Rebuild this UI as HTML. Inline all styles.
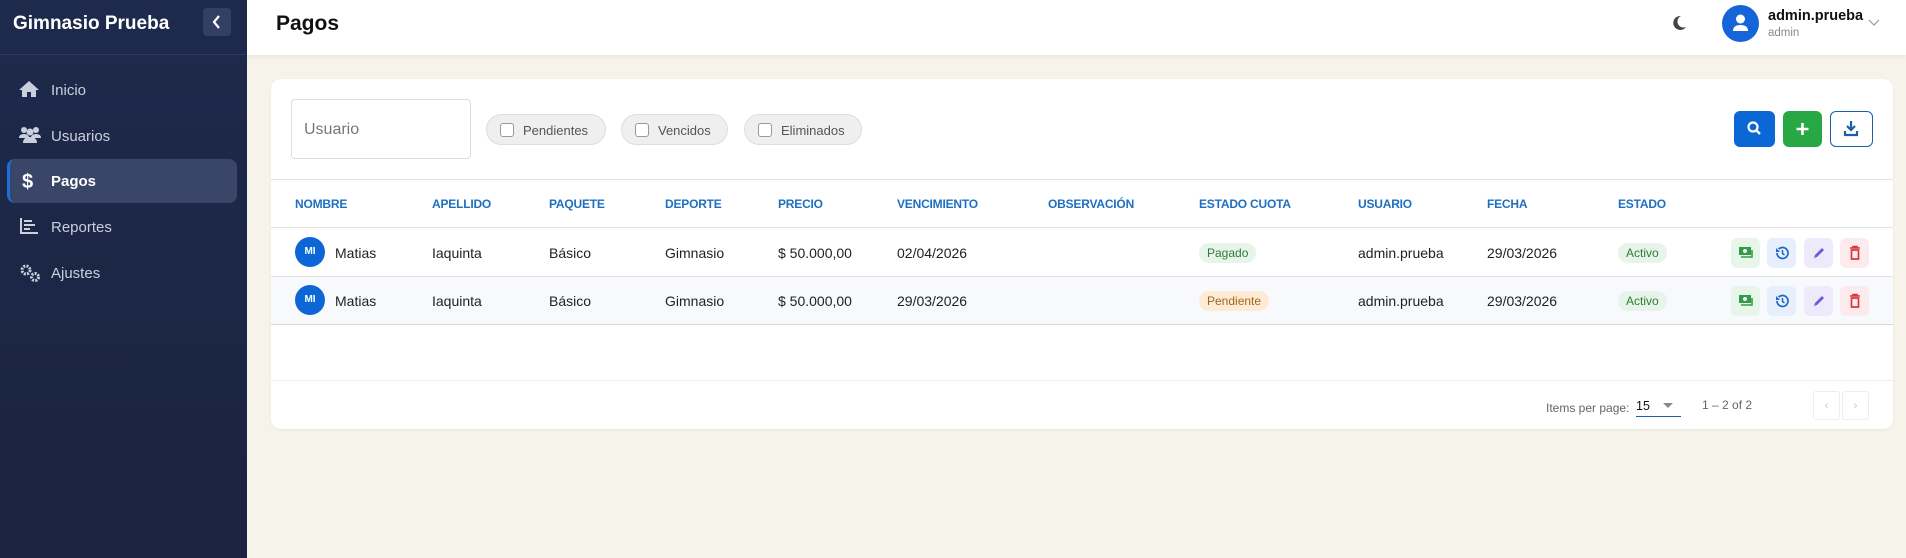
<!DOCTYPE html>
<html><head><meta charset="utf-8"><style>
*{box-sizing:border-box;margin:0;padding:0}
body{width:1906px;height:558px;overflow:hidden;background:#f6f4ea;font-family:"Liberation Sans",sans-serif;position:relative;color:#222}
.a{position:absolute;white-space:nowrap}
#side{left:0;top:0;width:247px;height:558px;background:linear-gradient(#1e2a4c,#1a2340);color:#c9cfdc}
#side .t{left:13px;top:13px;font-size:19px;font-weight:bold;color:#fff}
#side .tog{left:203px;top:8px;width:28px;height:28px;background:#334063;border-radius:4px}
#side .ln{left:0;top:54px;width:247px;height:1px;background:#2d3a5c}
.mi{left:7px;width:230px;height:44px;font-size:15px;color:#c9cfdc}
.mi span{position:absolute;left:44px;top:14px}
.mi svg{position:absolute;left:12px;top:12px}
.act{background:#3a4668;border-radius:8px;border-left:3px solid #1e6fd9;color:#fff;font-weight:bold}
#hdr{left:247px;top:0;width:1659px;height:55px;background:#fff;box-shadow:0 2px 5px rgba(0,0,0,.06)}
#card{left:271px;top:79px;width:1622px;height:350px;background:#fff;border-radius:10px;box-shadow:0 1px 3px rgba(0,0,0,.05)}
.chip{top:114px;height:31px;border:1px solid #ddd;background:#efefef;border-radius:16px;font-size:13px;color:#555}
.chip i{position:absolute;left:13px;top:8px;width:14px;height:14px;border:1px solid #999;border-radius:3px;background:#fff}
.chip span{position:absolute;left:36px;top:8px}
.hd{top:197px;font-size:12px;color:#1f6fc1;font-weight:bold;letter-spacing:-.2px}
.c{font-size:14px;color:#222}
.hl{left:271px;width:1622px;height:1px;background:#e2e2e2}
.badge{height:20px;border-radius:10px;font-size:12px;padding:3px 8px}
.ab{width:29px;height:30px;border-radius:6px}
.ab svg{position:absolute;left:7px;top:7px}
</style></head><body>
<div id="side" class="a">
<div class="a t">Gimnasio Prueba</div>
<div class="a tog"><svg width="28" height="28" viewBox="0 0 28 28"><path d="M16 8l-5 6 5 6" fill="none" stroke="#fff" stroke-width="2.2"/></svg></div>
<div class="a ln"></div>
<div class="a mi" style="top:68px"><svg width="20" height="18" viewBox="0 0 20 18"><path d="M10 1L0 10h3v7h5v-5h4v5h5v-7h3z" fill="#c9cfdc"/></svg><span>Inicio</span></div>
<div class="a mi" style="top:114px"><svg width="22" height="18" viewBox="0 0 22 18"><circle cx="5" cy="4" r="3" fill="#c9cfdc"/><circle cx="17" cy="4" r="3" fill="#c9cfdc"/><circle cx="11" cy="6" r="3.5" fill="#c9cfdc"/><path d="M0 12q0-4 5-4t5 4zM12 12q0-4 5-4t5 4zM4 17q0-6 7-6t7 6z" fill="#c9cfdc"/></svg><span>Usuarios</span></div>
<div class="a mi act" style="top:159px"><svg width="18" height="20" viewBox="0 0 18 20" style="left:9px"><text x="3" y="17" font-size="20" font-weight="bold" fill="#fff" font-family="Liberation Sans">$</text></svg><span style="left:41px">Pagos</span></div>
<div class="a mi" style="top:205px"><svg width="20" height="18" viewBox="0 0 20 18"><path d="M2 1v15h17" fill="none" stroke="#c9cfdc" stroke-width="2"/><path d="M5 4h8M5 8h11M5 12h6" stroke="#c9cfdc" stroke-width="2"/></svg><span>Reportes</span></div>
<div class="a mi" style="top:251px"><svg width="22" height="20" viewBox="0 0 22 20"><circle cx="7" cy="7" r="4" fill="none" stroke="#c9cfdc" stroke-width="3" stroke-dasharray="2 1.2"/><circle cx="16" cy="14" r="3.5" fill="none" stroke="#c9cfdc" stroke-width="3" stroke-dasharray="2 1.2"/></svg><span>Ajustes</span></div>
</div>
<div id="hdr" class="a">
<div class="a" style="left:29px;top:12px;font-size:21px;font-weight:bold;color:#111">Pagos</div>
<svg class="a" style="left:1424px;top:15px" width="16" height="16" viewBox="0 0 16 16"><path d="M10 1a7 7 0 1 0 5 11a6 6 0 0 1-5-11z" fill="#444"/></svg>
<div class="a" style="left:1475px;top:5px;width:37px;height:37px;border-radius:50%;background:#1565d8"><svg width="37" height="37" viewBox="0 0 37 37"><circle cx="18.5" cy="14" r="4.5" fill="#fff"/><path d="M11 26q0-6 7.5-6t7.5 6z" fill="#fff"/></svg></div>
<div class="a" style="left:1521px;top:8px;font-size:14.5px;font-weight:bold;color:#111">admin.prueba</div>
<div class="a" style="left:1521px;top:27px;font-size:11.5px;color:#888">admin</div>
<svg class="a" style="left:1621px;top:19px" width="12" height="8" viewBox="0 0 12 8"><path d="M1 1l5 5 5-5" fill="none" stroke="#999" stroke-width="1.2"/></svg>
</div>
<div id="card" class="a"></div>
<div class="a" style="left:291px;top:99px;width:180px;height:60px;border:1px solid #ddd;border-radius:4px"><span class="a" style="left:12px;top:21px;font-size:16px;color:#777">Usuario</span></div>
<div class="a chip" style="left:486px;width:120px"><i></i><span>Pendientes</span></div>
<div class="a chip" style="left:621px;width:107px"><i></i><span>Vencidos</span></div>
<div class="a chip" style="left:744px;width:118px"><i></i><span>Eliminados</span></div>
<div class="a" style="left:1734px;top:111px;width:41px;height:36px;background:#0b66d6;border-radius:6px"><svg width="41" height="36" viewBox="0 0 41 36"><circle cx="19" cy="16" r="4.5" fill="none" stroke="#fff" stroke-width="2.2"/><path d="M22 19l4 4" stroke="#fff" stroke-width="2.4"/></svg></div>
<div class="a" style="left:1783px;top:111px;width:39px;height:36px;background:#28a745;border-radius:6px"><svg width="39" height="36" viewBox="0 0 39 36"><path d="M19.5 12v12M13.5 18h12" stroke="#fff" stroke-width="2.6"/></svg></div>
<div class="a" style="left:1830px;top:111px;width:43px;height:36px;border:1.5px solid #1a5fa8;border-radius:6px"><svg width="40" height="33" viewBox="0 0 40 33"><path d="M20 9v9M16 14l4 4 4-4" fill="none" stroke="#1a5fa8" stroke-width="2.2"/><path d="M14 19v4h12v-4" fill="none" stroke="#1a5fa8" stroke-width="2.2"/></svg></div>
<div class="a hl" style="top:179px"></div>
<div class="a hd" style="left:295px">NOMBRE</div>
<div class="a hd" style="left:432px">APELLIDO</div>
<div class="a hd" style="left:549px">PAQUETE</div>
<div class="a hd" style="left:665px">DEPORTE</div>
<div class="a hd" style="left:778px">PRECIO</div>
<div class="a hd" style="left:897px">VENCIMIENTO</div>
<div class="a hd" style="left:1048px">OBSERVACIÓN</div>
<div class="a hd" style="left:1199px">ESTADO CUOTA</div>
<div class="a hd" style="left:1358px">USUARIO</div>
<div class="a hd" style="left:1487px">FECHA</div>
<div class="a hd" style="left:1618px">ESTADO</div>
<div class="a hl" style="top:227px"></div>
<div class="a" style="left:271px;top:277px;width:1622px;height:48px;background:#f7f9fc"></div>
<div class="a hl" style="top:276px"></div>
<div class="a hl" style="top:324px;background:#d6d6d6"></div>
<div class="a hl" style="top:380px;background:#ececec"></div>

<div class="a" style="left:0;top:229px">
<div class="a" style="left:295px;top:8px;width:30px;height:30px;border-radius:50%;background:#0d66d6;color:#fff;font-size:10px;font-weight:bold;text-align:center;line-height:30px">MI</div>
<div class="a c" style="left:335px;top:16px">Matias</div>
<div class="a c" style="left:432px;top:16px">Iaquinta</div>
<div class="a c" style="left:549px;top:16px">Básico</div>
<div class="a c" style="left:665px;top:16px">Gimnasio</div>
<div class="a c" style="left:778px;top:16px">$ 50.000,00</div>
<div class="a c" style="left:897px;top:16px">02/04/2026</div>
<div class="a badge" style="left:1199px;top:14px;background:#e6f4ea;color:#2e7d32">Pagado</div>
<div class="a c" style="left:1358px;top:16px">admin.prueba</div>
<div class="a c" style="left:1487px;top:16px">29/03/2026</div>
<div class="a badge" style="left:1618px;top:14px;background:#e6f4ea;color:#2e7d32">Activo</div>
</div>
<div class="a" style="left:0;top:277px">
<div class="a" style="left:295px;top:8px;width:30px;height:30px;border-radius:50%;background:#0d66d6;color:#fff;font-size:10px;font-weight:bold;text-align:center;line-height:30px">MI</div>
<div class="a c" style="left:335px;top:16px">Matias</div>
<div class="a c" style="left:432px;top:16px">Iaquinta</div>
<div class="a c" style="left:549px;top:16px">Básico</div>
<div class="a c" style="left:665px;top:16px">Gimnasio</div>
<div class="a c" style="left:778px;top:16px">$ 50.000,00</div>
<div class="a c" style="left:897px;top:16px">29/03/2026</div>
<div class="a badge" style="left:1199px;top:14px;background:#fdebd6;color:#a0661a">Pendiente</div>
<div class="a c" style="left:1358px;top:16px">admin.prueba</div>
<div class="a c" style="left:1487px;top:16px">29/03/2026</div>
<div class="a badge" style="left:1618px;top:14px;background:#e6f4ea;color:#2e7d32">Activo</div>
</div>

<div class="a" style="left:0;top:238px">
<div class="a ab" style="left:1731px;top:0;background:#e8f5ea"><svg width="16" height="16" viewBox="0 0 16 16"><rect x="1" y="2" width="12" height="8" fill="#2e9e44"/><circle cx="7" cy="6" r="2" fill="#e8f5ea"/><path d="M3 12h11V5" fill="none" stroke="#2e9e44" stroke-width="1.6"/></svg></div>
<div class="a ab" style="left:1767px;top:0;background:#e6effb"><svg width="16" height="16" viewBox="0 0 16 16"><path d="M3 8a5.5 5.5 0 1 0 1.6-3.9" fill="none" stroke="#1e66c8" stroke-width="1.7"/><path d="M2 3v4h4" fill="#1e66c8"/><path d="M8.5 5v3.5l2 1.5" fill="none" stroke="#1e66c8" stroke-width="1.5"/></svg></div>
<div class="a ab" style="left:1804px;top:0;background:#eeeafb"><svg width="16" height="16" viewBox="0 0 16 16"><path d="M3 13l1-3 7-7 2 2-7 7z" fill="#6c5ad6"/></svg></div>
<div class="a ab" style="left:1840px;top:0;background:#fcebed"><svg width="16" height="16" viewBox="0 0 16 16"><path d="M3 3h10M6 3V1.5h4V3" fill="none" stroke="#d9363e" stroke-width="1.6"/><path d="M4.5 5h7v9h-7z" fill="none" stroke="#d9363e" stroke-width="1.7"/></svg></div>
</div>
<div class="a" style="left:0;top:286px">
<div class="a ab" style="left:1731px;top:0;background:#e8f5ea"><svg width="16" height="16" viewBox="0 0 16 16"><rect x="1" y="2" width="12" height="8" fill="#2e9e44"/><circle cx="7" cy="6" r="2" fill="#e8f5ea"/><path d="M3 12h11V5" fill="none" stroke="#2e9e44" stroke-width="1.6"/></svg></div>
<div class="a ab" style="left:1767px;top:0;background:#e6effb"><svg width="16" height="16" viewBox="0 0 16 16"><path d="M3 8a5.5 5.5 0 1 0 1.6-3.9" fill="none" stroke="#1e66c8" stroke-width="1.7"/><path d="M2 3v4h4" fill="#1e66c8"/><path d="M8.5 5v3.5l2 1.5" fill="none" stroke="#1e66c8" stroke-width="1.5"/></svg></div>
<div class="a ab" style="left:1804px;top:0;background:#eeeafb"><svg width="16" height="16" viewBox="0 0 16 16"><path d="M3 13l1-3 7-7 2 2-7 7z" fill="#6c5ad6"/></svg></div>
<div class="a ab" style="left:1840px;top:0;background:#fcebed"><svg width="16" height="16" viewBox="0 0 16 16"><path d="M3 3h10M6 3V1.5h4V3" fill="none" stroke="#d9363e" stroke-width="1.6"/><path d="M4.5 5h7v9h-7z" fill="none" stroke="#d9363e" stroke-width="1.7"/></svg></div>
</div>

<div class="a" style="left:1546px;top:401px;font-size:12px;color:#666">Items per page:</div>
<div class="a" style="left:1636px;top:399px;width:45px;height:18px;border-bottom:1.5px solid #1f5fa8;font-size:12.5px;color:#111">15<svg class="a" style="left:27px;top:4px" width="10" height="6" viewBox="0 0 10 6"><path d="M0 0h10L5 5z" fill="#888"/></svg></div>
<div class="a" style="left:1702px;top:398px;font-size:12px;color:#666">1 – 2 of 2</div>
<div class="a" style="left:1813px;top:391px;width:27px;height:29px;border:1px solid #eee;border-radius:3px;color:#ccc;font-size:12px;text-align:center;line-height:27px">‹</div>
<div class="a" style="left:1842px;top:391px;width:27px;height:29px;border:1px solid #eee;border-radius:3px;color:#ccc;font-size:12px;text-align:center;line-height:27px">›</div>
</body></html>
